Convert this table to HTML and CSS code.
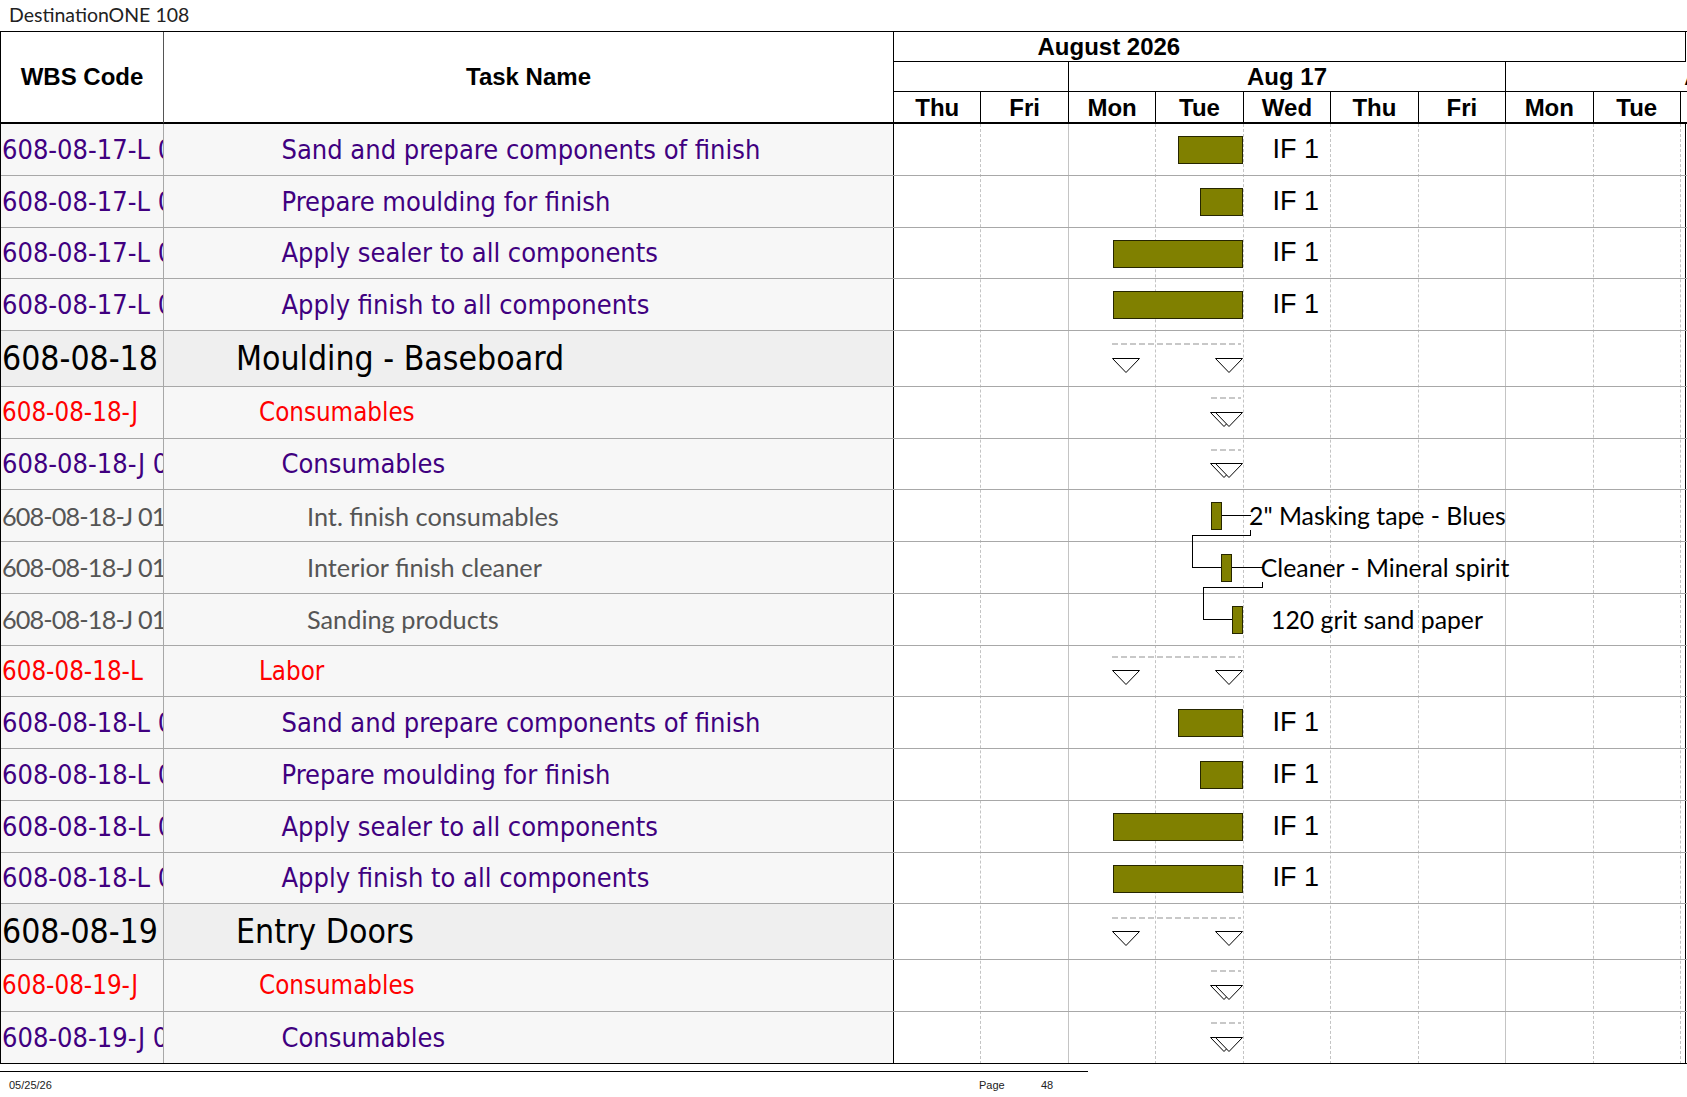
FILE: index.html
```html
<!DOCTYPE html>
<html>
<head>
<meta charset="utf-8">
<title>DestinationONE 108</title>
<link rel="stylesheet" href="styles.css">
</head>
<body>
<div class="page">
  <div class="title">DestinationONE 108</div>
  <div class="sheet">
    <div class="head">
      <div class="h-wbs">WBS Code</div>
      <div class="h-task">Task Name</div>
      <div class="h-time">
        <div class="ts-month"><span>August 2026</span></div>
        <div class="ts-weeks">
          <div class="wk w2"></div>
          <div class="wk w5">Aug 17</div>
          <div class="wk w5">Aug 24</div>
        </div>
        <div class="ts-days">
          <div class="day">Thu</div><div class="day">Fri</div><div class="day">Mon</div><div class="day">Tue</div><div class="day">Wed</div><div class="day">Thu</div><div class="day">Fri</div><div class="day">Mon</div><div class="day">Tue</div><div class="day">Wed</div>
        </div>
      </div>
    </div>
    <div class="body">
      <div class="grid">
        <div class="gcol"></div><div class="gcol wkend"></div><div class="gcol"></div><div class="gcol"></div><div class="gcol"></div><div class="gcol"></div><div class="gcol wkend"></div><div class="gcol"></div><div class="gcol"></div>
      </div>

      <div class="row task">
        <div class="c-wbs">608-08-17-L 01.1</div>
        <div class="c-name">Sand and prepare components of finish</div>
        <div class="c-gantt"><div class="bar" style="left:284.2px;width:64.6px"></div><div class="lbl if" style="left:378.5px">IF 1</div></div>
      </div>
      <div class="row task">
        <div class="c-wbs">608-08-17-L 01.2</div>
        <div class="c-name">Prepare moulding for finish</div>
        <div class="c-gantt"><div class="bar" style="left:306.1px;width:42.7px"></div><div class="lbl if" style="left:378.5px">IF 1</div></div>
      </div>
      <div class="row task">
        <div class="c-wbs">608-08-17-L 01.3</div>
        <div class="c-name">Apply sealer to all components</div>
        <div class="c-gantt"><div class="bar" style="left:218.6px;width:130.2px"></div><div class="lbl if" style="left:378.5px">IF 1</div></div>
      </div>
      <div class="row task">
        <div class="c-wbs">608-08-17-L 01.4</div>
        <div class="c-name">Apply finish to all components</div>
        <div class="c-gantt"><div class="bar" style="left:218.6px;width:130.2px"></div><div class="lbl if" style="left:378.5px">IF 1</div></div>
      </div>

      <div class="row sum">
        <div class="c-wbs">608-08-18</div>
        <div class="c-name">Moulding - Baseboard</div>
        <div class="c-gantt">
          <div class="sumline" style="left:218px;width:129px"></div>
          <svg class="tri" style="left:218px" viewBox="0 0 28 15"><path d="M0.5 0.5H27.5L14 14.5Z"/></svg>
          <svg class="tri" style="left:321px" viewBox="0 0 28 15"><path d="M0.5 0.5H27.5L14 14.5Z"/></svg>
        </div>
      </div>
      <div class="row grp">
        <div class="c-wbs">608-08-18-J</div>
        <div class="c-name">Consumables</div>
        <div class="c-gantt">
          <div class="sumline" style="left:316.5px;width:30.5px"></div>
          <svg class="tri" style="left:316px" viewBox="0 0 28 15"><path d="M0.5 0.5H27.5L14 14.5Z"/></svg>
          <svg class="tri" style="left:321px" viewBox="0 0 28 15"><path d="M0.5 0.5H27.5L14 14.5Z"/></svg>
        </div>
      </div>
      <div class="row task">
        <div class="c-wbs">608-08-18-J 01</div>
        <div class="c-name">Consumables</div>
        <div class="c-gantt">
          <div class="sumline" style="left:316.5px;width:30.5px"></div>
          <svg class="tri" style="left:316px" viewBox="0 0 28 15"><path d="M0.5 0.5H27.5L14 14.5Z"/></svg>
          <svg class="tri" style="left:321px" viewBox="0 0 28 15"><path d="M0.5 0.5H27.5L14 14.5Z"/></svg>
        </div>
      </div>
      <div class="row res">
        <div class="c-wbs">608-08-18-J 01.01</div>
        <div class="c-name">Int. finish consumables</div>
        <div class="c-gantt">
          <svg class="link" width="792" height="80"><path d="M327 25.5H356.5M356.5 39.5V45.5H298.5V77.5H327"/></svg>
          <div class="bar" style="left:316.5px;width:11px"></div>
          <div class="lbl rl" style="left:355px">2" Masking tape - Blues</div>
        </div>
      </div>
      <div class="row res">
        <div class="c-wbs">608-08-18-J 01.02</div>
        <div class="c-name">Interior finish cleaner</div>
        <div class="c-gantt">
          <svg class="link" width="792" height="80"><path d="M338 25.5H368.5M368.5 39.5V45.5H309.5V77.5H338"/></svg>
          <div class="bar" style="left:327.4px;width:11px"></div>
          <div class="lbl rl" style="left:366.8px">Cleaner - Mineral spirit</div>
        </div>
      </div>
      <div class="row res">
        <div class="c-wbs">608-08-18-J 01.03</div>
        <div class="c-name">Sanding products</div>
        <div class="c-gantt">
          <div class="bar" style="left:338.3px;width:11px"></div>
          <div class="lbl rl" style="left:377px">120 grit sand paper</div>
        </div>
      </div>
      <div class="row grp">
        <div class="c-wbs">608-08-18-L</div>
        <div class="c-name">Labor</div>
        <div class="c-gantt">
          <div class="sumline" style="left:218px;width:129px"></div>
          <svg class="tri" style="left:218px" viewBox="0 0 28 15"><path d="M0.5 0.5H27.5L14 14.5Z"/></svg>
          <svg class="tri" style="left:321px" viewBox="0 0 28 15"><path d="M0.5 0.5H27.5L14 14.5Z"/></svg>
        </div>
      </div>
      <div class="row task">
        <div class="c-wbs">608-08-18-L 01.1</div>
        <div class="c-name">Sand and prepare components of finish</div>
        <div class="c-gantt"><div class="bar" style="left:284.2px;width:64.6px"></div><div class="lbl if" style="left:378.5px">IF 1</div></div>
      </div>
      <div class="row task">
        <div class="c-wbs">608-08-18-L 01.2</div>
        <div class="c-name">Prepare moulding for finish</div>
        <div class="c-gantt"><div class="bar" style="left:306.1px;width:42.7px"></div><div class="lbl if" style="left:378.5px">IF 1</div></div>
      </div>
      <div class="row task">
        <div class="c-wbs">608-08-18-L 01.3</div>
        <div class="c-name">Apply sealer to all components</div>
        <div class="c-gantt"><div class="bar" style="left:218.6px;width:130.2px"></div><div class="lbl if" style="left:378.5px">IF 1</div></div>
      </div>
      <div class="row task">
        <div class="c-wbs">608-08-18-L 01.4</div>
        <div class="c-name">Apply finish to all components</div>
        <div class="c-gantt"><div class="bar" style="left:218.6px;width:130.2px"></div><div class="lbl if" style="left:378.5px">IF 1</div></div>
      </div>
      <div class="row sum">
        <div class="c-wbs">608-08-19</div>
        <div class="c-name">Entry Doors</div>
        <div class="c-gantt">
          <div class="sumline" style="left:218px;width:129px"></div>
          <svg class="tri" style="left:218px" viewBox="0 0 28 15"><path d="M0.5 0.5H27.5L14 14.5Z"/></svg>
          <svg class="tri" style="left:321px" viewBox="0 0 28 15"><path d="M0.5 0.5H27.5L14 14.5Z"/></svg>
        </div>
      </div>
      <div class="row grp">
        <div class="c-wbs">608-08-19-J</div>
        <div class="c-name">Consumables</div>
        <div class="c-gantt">
          <div class="sumline" style="left:316.5px;width:30.5px"></div>
          <svg class="tri" style="left:316px" viewBox="0 0 28 15"><path d="M0.5 0.5H27.5L14 14.5Z"/></svg>
          <svg class="tri" style="left:321px" viewBox="0 0 28 15"><path d="M0.5 0.5H27.5L14 14.5Z"/></svg>
        </div>
      </div>
      <div class="row task last">
        <div class="c-wbs">608-08-19-J 01</div>
        <div class="c-name">Consumables</div>
        <div class="c-gantt">
          <div class="sumline" style="left:316.5px;width:30.5px"></div>
          <svg class="tri" style="left:316px" viewBox="0 0 28 15"><path d="M0.5 0.5H27.5L14 14.5Z"/></svg>
          <svg class="tri" style="left:321px" viewBox="0 0 28 15"><path d="M0.5 0.5H27.5L14 14.5Z"/></svg>
        </div>
      </div>
    </div>
  </div>
  <div class="footer">
    <div class="f-date">05/25/26</div>
    <div class="f-page">Page</div>
    <div class="f-num">48</div>
  </div>
</div>
</body>
</html>
```

FILE: styles.css
```css
html, body {
  margin: 0;
  padding: 0;
  background: #fff;
}

.page {
  width: 1687px;
  height: 1097px;
  overflow: hidden;
  position: relative;
  background: #fff;
}

.title {
  height: 31px;
  box-sizing: border-box;
  padding-left: 9px;
  font-family: Lato, "DejaVu Sans", sans-serif;
  font-size: 19.5px;
  line-height: 29px;
  color: #222;
  white-space: nowrap;
}

.sheet {
  border-left: 1px solid #000;
}

/* ---------- header ---------- */
.head {
  display: grid;
  grid-template-columns: 163px 730px 793px;
  height: 93px;
  box-sizing: border-box;
  border-top: 1px solid #000;
}

.h-wbs,
.h-task {
  display: flex;
  align-items: center;
  justify-content: center;
  font-family: "Liberation Sans", Arial, sans-serif;
  font-weight: bold;
  font-size: 24px;
  color: #000;
  border-bottom: 2px solid #000;
}

.h-wbs {
  border-right: 1px solid #555;
}

.h-task {
  border-right: 1px solid #000;
}

.h-time {
  overflow: hidden;
  font-family: "Liberation Sans", Arial, sans-serif;
  font-weight: bold;
  font-size: 24px;
  color: #000;
}

.ts-month {
  width: 792px;
  height: 30px;
  box-sizing: border-box;
  border-right: 1px solid #000;
  border-bottom: 1px solid #000;
  padding-left: 143.5px;
  line-height: 29px;
  white-space: nowrap;
}

.ts-weeks {
  display: flex;
  height: 30px;
  box-sizing: border-box;
  border-bottom: 1px solid #000;
}

.wk {
  flex: none;
  box-sizing: border-box;
  border-right: 1px solid #000;
  text-align: center;
  line-height: 29px;
  white-space: nowrap;
}

.w2 {
  width: 174.9px;
}

.w5 {
  width: 437.25px;
}

.ts-days {
  display: flex;
  height: 32px;
  box-sizing: border-box;
  border-bottom: 2px solid #000;
}

.day {
  flex: none;
  width: 87.45px;
  box-sizing: border-box;
  border-right: 1px solid #000;
  text-align: center;
  line-height: 31px;
}

/* ---------- body ---------- */
.body {
  position: relative;
}

.grid {
  position: absolute;
  left: 893px;
  top: 0;
  bottom: 0;
  display: flex;
}

.gcol {
  flex: none;
  width: 87.45px;
  box-sizing: border-box;
  border-right: 1px dashed #c4c4c4;
}

.gcol.wkend {
  border-right-style: solid;
}

.row {
  display: grid;
  grid-template-columns: 163px 730px 792px;
  height: 51.75px;
  box-sizing: border-box;
  border-bottom: 1px solid #a8a8a8;
  position: relative;
}

.row.sum {
  height: 55.75px;
}

.row.last {
  border-bottom-color: #000;
}

.c-wbs {
  display: flex;
  align-items: center;
  padding-left: 1px;
  border-right: 1px solid #a8a8a8;
  background: #f7f7f7;
  overflow: hidden;
  white-space: nowrap;
}

.c-name {
  display: flex;
  align-items: center;
  border-right: 1px solid #000;
  background: #f7f7f7;
  overflow: hidden;
  white-space: nowrap;
}

.c-gantt {
  position: relative;
  border-right: 1px solid #000;
}

/* row kinds */
.task {
  font-family: "DejaVu Sans Condensed", "DejaVu Sans", sans-serif;
  font-stretch: condensed;
  font-size: 27px;
  color: #400080;
}

.task .c-name {
  padding-left: 117.5px;
}

.sum {
  font-family: "DejaVu Sans Condensed", "DejaVu Sans", sans-serif;
  font-stretch: condensed;
  font-size: 33.5px;
  color: #000;
}

.sum .c-wbs,
.sum .c-name {
  background: #efefef;
}

.sum .c-name {
  padding-left: 72px;
}

.grp {
  font-family: "DejaVu Sans Condensed", "DejaVu Sans", sans-serif;
  font-stretch: condensed;
  font-size: 25.7px;
  color: #f00;
}

.grp .c-name {
  padding-left: 95px;
}

.res {
  font-family: Lato, "Open Sans", sans-serif;
  font-size: 25.3px;
  color: #555;
}

.res .c-wbs {
  letter-spacing: -0.9px;
}

.res .c-name {
  padding-left: 143px;
}

/* gantt marks */
.bar {
  position: absolute;
  top: 12px;
  height: 28px;
  box-sizing: border-box;
  background: #808000;
  border: 1px solid #262600;
  z-index: 2;
}

.lbl {
  position: absolute;
  top: 0;
  height: 50.75px;
  display: flex;
  align-items: center;
  white-space: nowrap;
  color: #000;
  z-index: 2;
}

.lbl.if {
  font-family: "Liberation Sans", Arial, sans-serif;
  font-stretch: normal;
  font-size: 27px;
}

.lbl.rl {
  font-family: Lato, "Open Sans", sans-serif;
  font-size: 24.8px;
}

.sumline {
  position: absolute;
  top: calc(50% - 15px);
  height: 2px;
  background: repeating-linear-gradient(90deg, #c8c8c8 0 6px, transparent 6px 9px);
}

.tri {
  position: absolute;
  top: calc(50% - 0.5px);
  width: 28px;
  height: 15px;
  overflow: visible;
  z-index: 2;
}

.tri path {
  fill: #fff;
  stroke: #000;
  stroke-width: 1;
}

.link {
  position: absolute;
  left: 0;
  top: 0;
  overflow: visible;
  z-index: 1;
}

.link path {
  fill: none;
  stroke: #000;
  stroke-width: 1;
  shape-rendering: crispEdges;
}

/* ---------- footer ---------- */
.footer {
  margin-top: 7px;
  width: 1088px;
  border-top: 1.5px solid #000;
  display: grid;
  grid-template-columns: 979px 62px auto;
  padding-top: 7px;
  font-family: "Liberation Sans", Arial, sans-serif;
  font-size: 11px;
  line-height: 13px;
  color: #222;
}

.f-date {
  padding-left: 9px;
}
```
